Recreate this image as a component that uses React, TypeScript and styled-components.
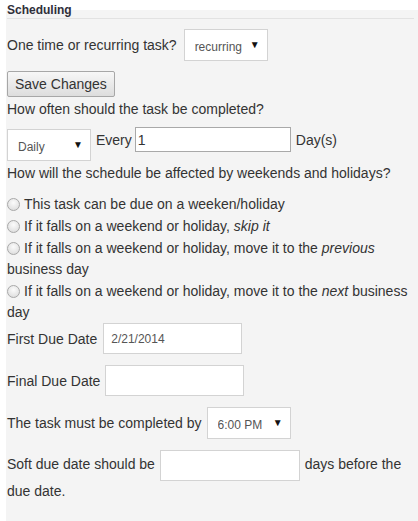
import styled, { createGlobalStyle } from 'styled-components'

const GlobalStyle = createGlobalStyle`
  html, body {
    margin: 0;
    padding: 0;
    background: #ffffff;
  }
  body {
    font-family: 'Liberation Sans', Arial, sans-serif;
    font-size: 14px;
    color: #333333;
  }
`

type Option = { lead: string; em?: string; tail?: string }

const weekendOptions: Option[] = [
  { lead: 'This task can be due on a weeken/holiday' },
  { lead: 'If it falls on a weekend or holiday, ', em: 'skip it' },
  { lead: 'If it falls on a weekend or holiday, move it to the ', em: 'previous', tail: ' business day' },
  { lead: 'If it falls on a weekend or holiday, move it to the ', em: 'next', tail: ' business day' },
]

export default function App() {
  return (
    <>
      <GlobalStyle />
      <Panel>
        <Legend>Scheduling</Legend>
        <Rule />

        <FieldRow $top={10} $gap={7}>
          <span>One time or recurring task?</span>
          <Dropdown value="recurring" options={['one time', 'recurring']} />
        </FieldRow>

        <SaveButton type="button">Save Changes</SaveButton>

        <Question $top={2}>How often should the task be completed?</Question>

        <FrequencyRow>
          <DropWrap $shift={2}>
            <Select defaultValue="Daily">
              <option>Daily</option>
              <option>Weekly</option>
              <option>Monthly</option>
            </Select>
            <Caret>▼</Caret>
          </DropWrap>
          <InlineText>Every</InlineText>
          <EveryInput defaultValue="1" />
          <InlineText>Day(s)</InlineText>
        </FrequencyRow>

        <Question $top={2}>How will the schedule be affected by weekends and holidays?</Question>

        <OptionList>
          {weekendOptions.map((o, i) => (
            <OptionItem key={i}>
              <Radio type="radio" name="weekend" />
              {o.lead}
              {o.em && <em>{o.em}</em>}
              {o.tail}
            </OptionItem>
          ))}
        </OptionList>

        <FieldRow $gap={6}>
          <span>First Due Date</span>
          <TextBox defaultValue="2/21/2014" />
        </FieldRow>

        <FieldRow $top={11}>
          <span>Final Due Date</span>
          <TextBox />
        </FieldRow>

        <FieldRow $top={11}>
          <span>The task must be completed by</span>
          <Dropdown value="6:00 PM" options={['5:00 PM', '6:00 PM', '7:00 PM']} />
        </FieldRow>

        <SoftLine>
          Soft due date should be <SoftBox /> days before the due date.
        </SoftLine>
      </Panel>
    </>
  )
}

const Dropdown = ({ value, options }: { value: string; options: string[] }) => (
  <DropWrap>
    <Select defaultValue={value}>
      {options.map((o) => (
        <option key={o}>{o}</option>
      ))}
    </Select>
    <Caret>▼</Caret>
  </DropWrap>
)

const Panel = styled.fieldset`
  margin: 2px 0 0 6px;
  padding: 0 4px 24px 1px;
  border: 0;
  min-width: 0;
  background: #f4f4f4;
`

const Legend = styled.legend`
  padding: 0;
  font-size: 12px;
  font-weight: bold;
  line-height: 16px;
  color: #2f2f3a;
`

const Rule = styled.div`
  border-top: 1px solid #e2e2e2;
`

const FieldRow = styled.div<{ $top?: number; $gap?: number }>`
  display: flex;
  align-items: center;
  gap: ${(p) => p.$gap ?? 5}px;
  margin-top: ${(p) => p.$top ?? 0}px;
`

const DropWrap = styled.span<{ $shift?: number }>`
  position: relative;
  display: inline-block;
  margin-top: ${(p) => p.$shift ?? 0}px;
  align-self: ${(p) => (p.$shift ? 'flex-start' : 'auto')};
`

const Select = styled.select`
  appearance: none;
  -webkit-appearance: none;
  box-sizing: border-box;
  width: 84px;
  height: 32px;
  margin: 0;
  padding: 4px 0 0 10px;
  border: 1px solid #d3d3d3;
  border-radius: 0;
  background: #ffffff;
  font-family: 'Liberation Sans', Arial, sans-serif;
  font-size: 12px;
  color: #555555;
  outline: none;
`

const Caret = styled.span`
  position: absolute;
  right: 8px;
  top: 50%;
  transform: translateY(-58%);
  font-size: 10px;
  color: #111111;
  pointer-events: none;
`

const SaveButton = styled.button`
  display: block;
  box-sizing: border-box;
  height: 26px;
  margin: 10px 0 0;
  padding: 0 7px;
  border: 1px solid #a7a7a7;
  border-radius: 2px;
  background: linear-gradient(#f7f7f7, #dddddd);
  font-family: 'Liberation Sans', Arial, sans-serif;
  font-size: 14px;
  color: #333333;
`

const Question = styled.div<{ $top?: number }>`
  margin-top: ${(p) => p.$top ?? 0}px;
  line-height: 21px;
`

const FrequencyRow = styled.div`
  display: flex;
  align-items: flex-start;
  margin-top: 7px;
  height: 34px;
`

const InlineText = styled.span`
  line-height: 27px;
  margin: 0 3px 0 5px;
`

const EveryInput = styled.input`
  box-sizing: border-box;
  width: 156px;
  height: 25px;
  margin: 0;
  padding: 0 2px;
  border: 1px solid #a9a9a9;
  background: #ffffff;
  font-family: 'Liberation Sans', Arial, sans-serif;
  font-size: 14px;
  color: #333333;
  outline: none;
`

const OptionList = styled.div`
  margin-top: 10px;
`

const OptionItem = styled.div`
  line-height: 21px;
  margin-bottom: 1px;

  &:last-child {
    margin-bottom: 0;
  }

  em {
    font-style: italic;
  }
`

const Radio = styled.input`
  appearance: none;
  -webkit-appearance: none;
  box-sizing: border-box;
  width: 13px;
  height: 13px;
  margin: 0 4px 0 0;
  border: 1px solid #a8a8a8;
  border-radius: 50%;
  background: radial-gradient(circle at 50% 35%, #fbfbfb 0%, #e6e6e6 60%, #d6d6d6 100%);
  vertical-align: -2px;
`

const TextBox = styled.input`
  box-sizing: border-box;
  width: 139px;
  height: 31px;
  margin: 0;
  padding: 0 7px;
  border: 1px solid #d3d3d3;
  background: #ffffff;
  font-family: 'Liberation Sans', Arial, sans-serif;
  font-size: 12px;
  color: #555555;
  outline: none;
`

const SoftLine = styled.div`
  margin-top: 11px;
  line-height: 21px;
`

const SoftBox = styled(TextBox)`
  width: 140px;
  vertical-align: middle;
  margin: 0 1px;
`
